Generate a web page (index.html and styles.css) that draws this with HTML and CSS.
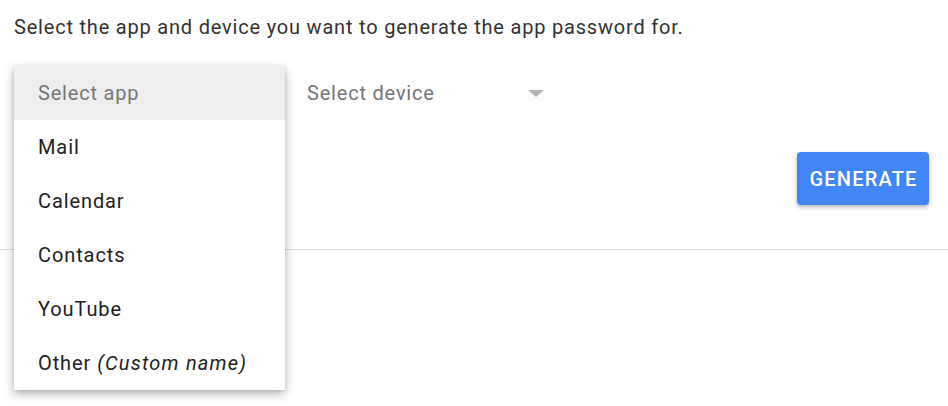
FILE: index.html
```html
<!DOCTYPE html>
<html>
<head>
<meta charset="utf-8">
<link rel="stylesheet" href="styles.css">
</head>
<body>
<div class="page">
  <p class="intro">Select the app and device you want to generate the app password for.</p>
  <div class="fields">
    <div class="select app-select">
      <span class="placeholder">Select app</span>
      <ul class="menu">
        <li class="item selected">Select app</li>
        <li class="item">Mail</li>
        <li class="item">Calendar</li>
        <li class="item">Contacts</li>
        <li class="item">YouTube</li>
        <li class="item">Other <em>(Custom name)</em></li>
      </ul>
    </div>
    <div class="select device-select">
      <span class="placeholder">Select device</span>
      <span class="arrow"></span>
    </div>
  </div>
  <div class="actions">
    <button class="generate">GENERATE</button>
  </div>
  <div class="divider"></div>
</div>
</body>
</html>
```
FILE: styles.css
```css
* { box-sizing: border-box; }
html, body { margin: 0; padding: 0; background: #fff; }
body { font-family: Roboto, "Noto Sans", sans-serif; color: #333; }
.page { width: 948px; height: 406px; overflow: hidden; }
.intro {
  margin: 0;
  padding: 16px 0 0 14px;
  font-size: 20px;
  line-height: 22px;
  letter-spacing: 0.8px;
  color: #333;
}
.fields {
  display: flex;
  margin-top: 28px;
  padding-left: 14px;
  gap: 22px;
}
.select {
  position: relative;
  height: 54px;
  display: flex;
  align-items: center;
}
.app-select { width: 271px; padding-left: 24px; }
.device-select { width: 240px; justify-content: space-between; }
.placeholder { font-size: 20px; letter-spacing: 0.8px; color: #757575; }
.arrow {
  width: 0; height: 0;
  border-left: 8px solid transparent;
  border-right: 8px solid transparent;
  border-top: 7px solid #b3b3b3;
  margin-right: 3px;
}
.menu {
  position: absolute;
  left: 0; top: 0;
  width: 271px;
  margin: 0; padding: 0;
  list-style: none;
  background: #fff;
  box-shadow: 0 4px 10px rgba(0,0,0,0.28), 0 1px 4px rgba(0,0,0,0.12);
  z-index: 2;
}
.item {
  height: 54px;
  display: flex;
  align-items: center;
  padding-left: 24px;
  font-size: 20px;
  letter-spacing: 0.9px;
  color: #212121;
}
.item em { font-style: italic; margin-left: 6px; letter-spacing: 1.2px; }
.item.selected { background: #eeeeee; color: #757575; letter-spacing: 0.8px; }
.actions {
  display: flex;
  justify-content: flex-end;
  padding-right: 19px;
  margin-top: 32px;
}
.generate {
  width: 132px;
  height: 53px;
  border: 0;
  border-radius: 4px;
  background: #4285f4;
  color: #fff;
  font-family: Roboto, sans-serif;
  font-weight: 500;
  font-size: 20px;
  letter-spacing: 1.2px;
  padding: 0 0 0 1px;
  box-shadow: 0 2px 4px rgba(0,0,0,0.3);
}
.divider {
  margin-top: 44px;
  height: 1px;
  background: #dcdcdc;
}
```
